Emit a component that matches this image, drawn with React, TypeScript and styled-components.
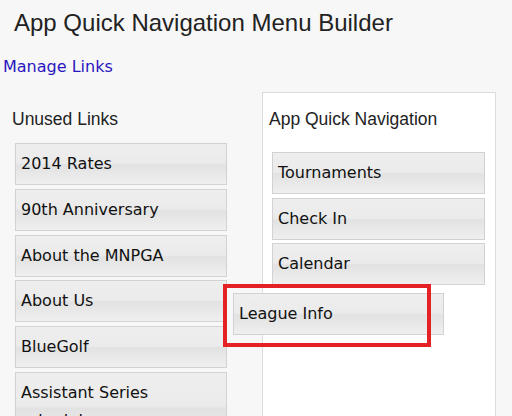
import React from "react";
import styled, { createGlobalStyle } from "styled-components";

const Global = createGlobalStyle`
  html, body { margin: 0; padding: 0; background: #f7f7f7; }
  body { width: 512px; height: 416px; overflow: hidden; position: relative; }
`;

const Page = styled.div`
  position: relative;
  width: 512px;
  height: 416px;
  overflow: hidden;
  background: #f7f7f7;
`;

const Title = styled.h1`
  margin: 0;
  padding: 9px 0 0 14px;
  font-family: "Liberation Sans", Arial, sans-serif;
  font-weight: normal;
  font-size: 24px;
  line-height: 28px;
  color: #222;
`;

const ManageLink = styled.a`
  display: inline-block;
  margin: 20px 0 0 3px;
  font-family: "DejaVu Sans", Verdana, sans-serif;
  font-size: 16px;
  line-height: 19px;
  color: #2a16c0;
  text-decoration: none;
`;

const Columns = styled.div`
  display: flex;
  margin-top: 16px;
  align-items: flex-start;
`;

const LeftColumn = styled.div`
  flex: 0 0 262px;
  width: 262px;
  padding: 17px 0 0 12px;
  box-sizing: border-box;
`;

const Panel = styled.div`
  flex: 0 0 234px;
  width: 234px;
  min-height: 360px;
  box-sizing: border-box;
  background: #fff;
  border: 1px solid #dcdcdc;
  padding: 16px 6px 0 6px;
`;

const Heading = styled.h2`
  margin: 0;
  font-family: "Liberation Sans", Arial, sans-serif;
  font-weight: normal;
  font-size: 17.5px;
  line-height: 21px;
  color: #222;
`;

const List = styled.div<{ $top: number; $left: number; $gap: number }>`
  display: flex;
  flex-direction: column;
  gap: ${(p) => p.$gap}px;
  margin-top: ${(p) => p.$top}px;
  padding-left: ${(p) => p.$left}px;
`;

const Item = styled.div<{ $width: number }>`
  width: ${(p) => p.$width}px;
  box-sizing: border-box;
  border: 1px solid #d2d2d2;
  padding: 6px 5px;
  font-family: "DejaVu Sans", Verdana, sans-serif;
  font-size: 16px;
  line-height: 28px;
  color: #111;
  background: linear-gradient(
    to bottom,
    #eeeeee 0%,
    #ebebeb 48%,
    #e2e2e2 52%,
    #efefef 100%
  );
`;

const DraggedItem = styled(Item)`
  position: absolute;
  left: 233px;
  top: 293px;
`;

const Highlight = styled.div`
  position: absolute;
  left: 223px;
  top: 284px;
  width: 208px;
  height: 63px;
  box-sizing: border-box;
  border: 4px solid #e42124;
  pointer-events: none;
`;

const unused = [
  "2014 Rates",
  "90th Anniversary",
  "About the MNPGA",
  "About Us",
  "BlueGolf",
  "Assistant Series schedule",
];

const used = ["Tournaments", "Check In", "Calendar"];

export default function App() {
  return (
    <>
      <Global />
      <Page>
        <Title>App Quick Navigation Menu Builder</Title>
        <ManageLink href="#">Manage Links</ManageLink>
        <Columns>
          <LeftColumn>
            <Heading>Unused Links</Heading>
            <List $top={13} $left={3} $gap={3.8}>
              {unused.map((t) => (
                <Item key={t} $width={212}>
                  {t}
                </Item>
              ))}
            </List>
          </LeftColumn>
          <Panel>
            <Heading>App Quick Navigation</Heading>
            <List $top={22} $left={3} $gap={3.6}>
              {used.map((t) => (
                <Item key={t} $width={213}>
                  {t}
                </Item>
              ))}
            </List>
          </Panel>
        </Columns>
        <DraggedItem $width={211}>League Info</DraggedItem>
        <Highlight />
      </Page>
    </>
  );
}
